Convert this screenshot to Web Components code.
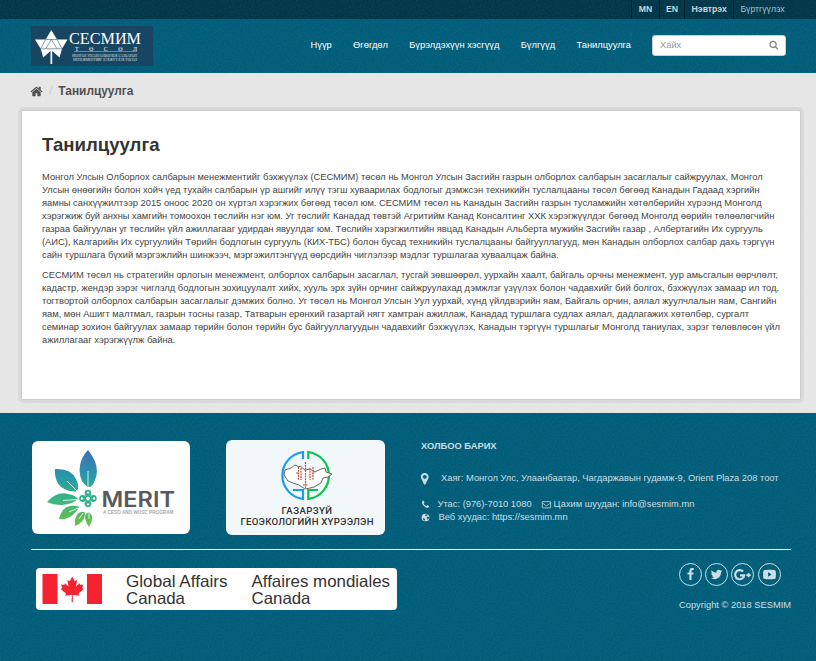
<!DOCTYPE html>
<html lang="mn">
<head>
<meta charset="utf-8">
<title>Танилцуулга</title>
<style>
html,body{margin:0;padding:0}
body{width:816px;height:661px;overflow:hidden;background:#005d7a;font:9.33px/13px "Liberation Sans",Arial,sans-serif;color:#444;
--grain:url("data:image/svg+xml,%3Csvg xmlns='http://www.w3.org/2000/svg' width='120' height='120'%3E%3Cfilter id='n' x='0' y='0' width='1' height='1'%3E%3CfeTurbulence type='fractalNoise' baseFrequency='.6' numOctaves='2' stitchTiles='stitch'/%3E%3CfeColorMatrix values='0 0 0 0 .5 0 0 0 0 .5 0 0 0 0 .5 .16 0 0 0 -.06'/%3E%3C/filter%3E%3Crect width='120' height='120' filter='url(%23n)'/%3E%3C/svg%3E")}
</style>
</head>
<body>
<site-page></site-page>
<script>
const define = (name, html) => {
  const t = document.createElement('template');
  t.innerHTML = html;
  customElements.define(name, class extends HTMLElement {
    constructor() {
      super();
      this.attachShadow({ mode: 'open' }).append(t.content.cloneNode(true));
    }
  });
};

const glyphs = {
  home: '<path d="M1472 992v480q0 26-19 45t-45 19h-384v-384h-256v384h-384q-26 0-45-19t-19-45v-480q0-1 .5-3t.5-3l575-474 575 474q1 2 1 6zm223-69l-62 74q-8 9-21 11h-3q-13 0-21-7l-692-577-692 577q-12 8-24 7-13-2-21-11l-62-74q-8-10-7-23.5t11-21.5l719-599q32-26 76-26t76 26l244 204v-195q0-14 9-23t23-9h192q14 0 23 9t9 23v408l219 182q10 8 11 21.5t-7 23.5z"/>',
  search: '<path d="M1216 832q0-185-131.500-316.500t-316.500-131.500-316.500 131.500-131.500 316.500 131.500 316.500 316.500 131.500 316.500-131.500 131.500-316.500zm512 832q0 52-38 90t-90 38q-54 0-90-38l-343-342q-179 124-399 124-143 0-273.500-55.500t-225-150-150-225-55.500-273.500 55.500-273.500 150-225 225-150 273.500-55.500 273.500 55.500 225 150 150 225 55.500 273.500q0 220-124 399l343 343q37 37 37 90z"/>',
  marker: '<path d="M1152 640q0-106-75-181t-181-75-181 75-75 181 75 181 181 75 181-75 75-181zm256 0q0 109-33 179l-364 774q-16 33-47.500 52t-67.500 19-67.500-19-46.500-52l-365-774q-33-70-33-179 0-212 150-362t362-150 362 150 150 362z"/>',
  phone: '<path d="M1600 1240q0 27-10 70.500t-21 68.500q-21 50-122 106-94 51-186 51-27 0-52.500-3.500t-57.500-12.500-47.500-14.500-55.500-20.500-49-18q-98-35-175-83-128-79-264.500-215.500t-215.500-264.500q-48-77-83-175-3-9-18-49t-20.500-55.500-14.500-47.500-12.500-57.500-3.500-52.500q0-92 51-186 56-101 106-122 25-11 68.500-21t70.500-10q14 0 21 3 18 6 53 76 11 19 30 54t35 63.500 31 53.500q3 4 17.500 25t21.500 35.500 7 28.500q0 20-28.500 50t-62 55-62 53-28.500 46q0 9 5 22.500t8.500 20.500 14 24 11.500 19q76 137 174 235t235 174q2 1 19 11.500t24 14 20.500 8.500 22.500 5q18 0 46-28.500t53-62 55-62 50-28.500q14 0 28.500 7t35.500 21.500 25 17.500q25 15 53.500 31t63.500 35 54 30q70 35 76 53 3 7 3 21z"/>',
  envelope: '<path fill="none" stroke="currentColor" stroke-width="150" d="M65 420q0-100 100-100h1462q100 0 100 100v1052q0 100-100 100H165q-100 0-100-100zM80 560l640 520q176 130 352 0l640-520"/>',
  globe: '<circle cx="896" cy="896" r="768"/><path fill="#005d7a" d="M900 300l300-60 190 120-110 110-190 60-60 150-150-90-60-150zM1180 800l230-60 180 100-20 220-150 230-110 100-60-300-120-130zM400 1060l260 30 170 130-30 130-120 170-200-110-110-170z"/>',
  facebook: '<path d="M1343 12v264h-157q-86 0-116 36t-30 108v189h293l-39 296h-254v759h-306v-759h-255v-296h255v-218q0-186 104-288.500t277-102.500q147 0 228 12z"/>',
  twitter: '<path d="M1684 408q-67 98-162 167 1 14 1 42 0 130-38 259.500t-115.500 248.500-184.500 210.500-258 146-323 54.500q-271 0-496-145 35 4 78 4 225 0 401-138-105-2-188-64.500t-114-159.500q33 5 61 5 43 0 85-11-112-23-185.500-111.500t-73.500-205.500v-4q68 38 146 41-66-44-105-115t-39-154q0-88 44-163 121 149 294.500 238.500t371.500 99.500q-8-38-8-74 0-134 94.500-228.500t228.500-94.500q140 0 236 102 109-21 205-78-37 115-142 178 93-10 186-50z"/>',
  gplus: '<path fill="none" stroke="currentColor" stroke-width="240" d="M900 510a510 510 0 1 0 135 430H560"/><path fill="none" stroke="currentColor" stroke-width="190" d="M1520 660v500M1270 910h500"/>',
  youtube: '<path fill-rule="evenodd" d="M250 265q646-50 1292 0q200 15 220 230q50 400 0 802q-20 215-220 230q-646 50-1292 0q-200-15-220-230q-50-400 0-802q20-215 220-230zM700 580v620l500-310z"/>'
};
customElements.define('fa-icon', class extends HTMLElement {
  constructor() { super(); this.attachShadow({ mode: 'open' }); }
  connectedCallback() {
    this.shadowRoot.innerHTML = `<style>:host{display:inline-block;width:10px;height:10px}svg{display:block;width:100%;height:100%;fill:currentColor;overflow:visible}</style><svg viewBox="0 0 1792 1792">${glyphs[this.getAttribute('name')]}</svg>`;
  }
});

define('account-bar', `<style>
:host{display:block;height:19px;background:var(--grain),#003647;color:#c6d7db}
ul{margin:0 25px 0 0;padding:0;list-style:none;display:flex;justify-content:flex-end;height:19px}
li{box-sizing:border-box;border-left:1px solid #00212b;padding:0 6.3px;line-height:18px;font-weight:bold;white-space:nowrap;font-size:8.7px}
li:first-child{padding-left:7px}
li:last-child{font-weight:normal;color:#a5c4cf}
</style><ul><li>MN</li><li>EN</li><li>Нэвтрэх</li><li>Бүртгүүлэх</li></ul>`);

define('sesmim-logo', `<style>:host{display:block;width:122px;height:40px}svg{display:block}</style>
<svg width="122" height="40" viewBox="0 0 122 40"><rect width="122" height="40" fill="#184562"/>
<path fill="#fff" d="M20.300 4L26 13.500H36.500L31 22.800 28.500 31.500 21.200 25V38H19.500V25L12.200 31.500 9.700 22.800 4 13.500H14.700z"/>
<path d="M14.700 13.500H26M9.500 22.800h21.600M14.700 13.500L9.700 22.800M26 13.500l5 9.300M14.700 22.800l5.600-9.300 5.700 9.300" fill="none" stroke="#54768c" stroke-width=".7"/>
<g fill="#fff" font-family="Liberation Serif,serif"><text x="38" y="18" font-size="16" textLength="72" lengthAdjust="spacingAndGlyphs">СЕСМИМ</text>
<text x="44" y="24.700" font-size="6" textLength="62">ТӨСӨЛ</text><path d="M43 25.500h63v.6H43z" opacity=".7"/>
<g font-size="3.200" fill="#d5e0e8"><text x="41" y="31.200" textLength="65" lengthAdjust="spacingAndGlyphs">МОНГОЛ УЛСЫН ОЛБОРЛОХ САЛБАРЫН</text><text x="42" y="35.200" textLength="64" lengthAdjust="spacingAndGlyphs">МЕНЕЖМЕНТИЙГ БЭХЖҮҮЛЭХ ТӨСӨЛ</text></g></g></svg>`);

define('search-box', `<style>:host{box-sizing:border-box;display:flex;align-items:center;justify-content:space-between;width:134px;height:21px;padding:0 7px 0 7px;background:#fff;border:1px solid #ccc;border-radius:3px;color:#999}span{margin-top:-1px}fa-icon{width:9.500px;height:9.500px;color:#888;margin-top:-1px}</style><span>Хайх</span><fa-icon name="search"></fa-icon>`);

define('site-header', `<style>
:host{display:flex;box-sizing:border-box;height:54px;padding:7px 30px 0 31px;background:var(--grain),#005d7a;justify-content:space-between;align-items:flex-start}
.r{display:flex;align-items:center;padding-top:9px}
nav{display:flex;gap:21.300px;margin:-2px 21px 0 0;color:#fff;white-space:nowrap;line-height:20px}
</style><sesmim-logo></sesmim-logo><div class="r"><nav><span>Нүүр</span><span>Өгөгдөл</span><span>Бүрэлдэхүүн хэсгүүд</span><span>Бүлгүүд</span><span>Танилцуулга</span></nav><search-box></search-box></div>`);

define('bread-crumb', `<style>:host{display:flex;align-items:center;height:15px;font-size:11.900px;font-weight:bold;color:#505050}fa-icon{width:13px;height:13px;margin:-1px 0 0 -1px}i{font-style:normal;font-weight:normal;color:#ccc;margin:0 6px 0 6px}</style><fa-icon name="home"></fa-icon><i>/</i><slot></slot>`);

define('content-card', `<style>:host{display:block;box-sizing:border-box;margin:0 15px 0 21px;height:290px;background:#fff;border:1px solid #ccc;border-radius:2px;box-shadow:0 0 0 3px rgba(0,0,0,.05);padding:24px 20px}
::slotted(h1){margin:0 0 16px;font-size:18.6px;line-height:20px;color:#333}
::slotted(p){margin:0 0 6.500px;white-space:nowrap}</style><slot></slot>`);

define('merit-logo', `<style>:host{display:block;width:158px;height:93px}svg{display:block}</style>
<svg width="158" height="93" viewBox="0 0 158 93"><defs><linearGradient id="g" gradientUnits="userSpaceOnUse" x1="0" y1="10" x2="0" y2="86"><stop offset="0" stop-color="#3f6fb8"/><stop offset=".35" stop-color="#279aa9"/><stop offset=".62" stop-color="#36b588"/><stop offset="1" stop-color="#72bf44"/></linearGradient></defs>
<rect width="158" height="93" rx="6" fill="#fff"/>
<g fill="url(#g)"><path d="M56 9Q69 25 63 39 60 47 56 46 48 42 47.500 29 48 17 56 9zM23 28Q39 27 44 38 48 46 45 50 39 52 29 46 22 39 23 28zM15 61Q25 50 36 53 43 54 46 58 41 63 30 64 21 64 15 61zM27 78Q30 66 38 65 44 64 47 66 45 71 38 76 32 79 27 78zM43 85Q42 73 49 71 53 70 53 73 53 81 43 85zM57 86Q51 77 54 73 57 70 59 73 62 78 57 86z"/></g>
<g fill="none" stroke="#fff" stroke-width=".8"><path d="M56 47V30M46 51L35 40M45 58.500l-14 1M46 67l-9 4M51 72l-4 6M57 72v6"/></g>
<g transform="translate(56 57.500)" fill="none" stroke="#2fb28d" stroke-width="1.600"><circle cy="-5.300" r="2.600"/><circle cy="5.300" r="2.600"/><circle cx="-5.300" r="2.600"/><circle cx="5.300" r="2.600"/><path d="M-6-2.500L2.500 6M-2.500-6L6 2.500M6-2.500L-2.500 6M2.500-6L-6 2.500"/></g>
<text x="69.500" y="65.500" font-family="Inter,sans-serif" font-weight="600" font-size="21.500" fill="#5a5a5c" textLength="73.500" lengthAdjust="spacingAndGlyphs">MERIT</text>
<text x="71" y="72.500" font-family="Liberation Sans,sans-serif" font-weight="bold" font-size="4.700" fill="#aaa" textLength="70.500" lengthAdjust="spacingAndGlyphs">A CESO AND WUSC PROGRAM</text></svg>`);

define('geo-logo', `<style>:host{display:block;width:159px;height:95px}svg{display:block}</style>
<svg width="159" height="95" viewBox="0 0 159 95"><rect width="159" height="95" rx="6" fill="#f2f7fa"/>
<g fill="none" stroke-width="2.200"><path stroke="#189cf0" d="M77 19V12A23.700 23.700 0 0 0 77 59V50H67"/><path stroke="#08c44c" d="M82.300 19V12A23.700 23.700 0 0 1 82.300 59V50H92"/></g>
<path d="M59 30l6-2 4-3 4 2 1-1 5 4 5-1 5 3 6-3 4-1 1 4 6 2-4 3-5 1-2 5-7 4-4 1-5 1-6-4-6-2-5-2-4-6z" fill="#fff" stroke="#444" stroke-width=".8"/>
<path d="M79.500 22v26M75 28v12M84 28v12M72.500 27v13M87 27v13M70 33h3M86 33h3M77 45h5" stroke="#b9543d" stroke-width="1.200" stroke-dasharray="2 .7"/>
<g font-family="Roboto,sans-serif" font-weight="500" font-size="9.600" fill="#333"><text x="55.500" y="73.500" textLength="50.500">ГАЗАРЗҮЙ</text><text x="14.500" y="84.700" textLength="133">ГЕОЭКОЛОГИЙН ХҮРЭЭЛЭН</text></g></svg>`);

define('canada-logo', `<style>:host{display:block;width:361px;height:42px}svg{display:block}</style>
<svg width="361" height="42" viewBox="0 0 361 42"><rect width="361" height="42" rx="4" fill="#fff"/><g fill="#f5232f"><path d="M6.500 6h15v30h-15zM51 6h15v30H51z"/>
<path d="M36.200 8.500l2.600 4.800 2.300-1.200-1.100 6.500 3.500-3.300.7 1.700 3.200-.6-1.200 3.800 1.600.8-5.300 4.500.8 2.200-6.600-.9.200 7.200h-1.300l.2-7.200-6.600.9.800-2.200-5.300-4.500 1.600-.8-1.200-3.800 3.200.6.700-1.700 3.500 3.300-1.100-6.500 2.300 1.200z"/></g>
<g font-family="Liberation Sans,Arial,sans-serif" font-size="16.500" fill="#333"><text x="90" y="18.500" textLength="101.500" lengthAdjust="spacingAndGlyphs">Global Affairs</text><text x="90" y="35.800" textLength="59" lengthAdjust="spacingAndGlyphs">Canada</text><text x="215.500" y="18.500" textLength="138.500" lengthAdjust="spacingAndGlyphs">Affaires mondiales</text><text x="215.500" y="35.800" textLength="59" lengthAdjust="spacingAndGlyphs">Canada</text></g></svg>`);

define('contact-info', `<style>:host{display:block;color:#ccdfe4}
h2{margin:0 0 19px;font-size:9.33px;line-height:13px}
div{display:flex;align-items:center;height:13px;white-space:nowrap}
.a{margin-bottom:13px}fa-icon{flex:none;width:9px;height:9px}.a fa-icon{width:13.500px;height:13.500px;margin:0 9.500px 0 -3px}
</style><h2>ХОЛБОО БАРИХ</h2><div class="a"><fa-icon name="marker"></fa-icon><span>Хаяг: Монгол Улс, Улаанбаатар, Чагдаржавын гудамж-9, Orient Plaza 208 тоот</span></div>
<div><fa-icon name="phone" style="margin-right:7.500px"></fa-icon><span>Утас: (976)-7010 1080</span><fa-icon name="envelope" style="margin:0 3px 0 10px"></fa-icon><span>Цахим шуудан: info@sesmim.mn</span></div>
<div><fa-icon name="globe" style="margin-right:8.500px"></fa-icon><span>Веб хуудас: https://sesmim.mn</span></div>`);

define('social-links', `<style>:host{display:block;width:112px;color:#ccdfe4}
.s{display:flex;gap:3.200px;margin-bottom:12.500px}.s span{box-sizing:border-box;width:23px;height:23px;border:1px solid #ccdfe4;border-radius:50%;display:flex;align-items:center;justify-content:center}fa-icon{flex:none;width:13px;height:13px}p{margin:0;white-space:nowrap}</style>
<div class="s"><span><fa-icon name="facebook"></fa-icon></span><span><fa-icon name="twitter"></fa-icon></span><span><fa-icon name="gplus" style="width:16px;height:16px"></fa-icon></span><span><fa-icon name="youtube"></fa-icon></span></div><p>Copyright © 2018 SESMIM</p>`);

define('site-footer', `<style>:host{display:block;box-sizing:border-box;height:248px;background:var(--grain),#005d7a;padding:27px 25px 0 31px}
.t{display:grid;grid-template-columns:194px 196px 1fr;height:109px;border-bottom:1px solid #fff}
merit-logo{margin:1px 0 0 1px}geo-logo{margin:0 0 0 1px}
.b{display:flex;justify-content:space-between;padding:13px 0 0 5px}canada-logo{margin-top:5px}</style>
<div class="t"><merit-logo></merit-logo><geo-logo></geo-logo><contact-info></contact-info></div><div class="b"><canada-logo></canada-logo><social-links></social-links></div>`);

define('site-page', `<style>:host{display:block}main{display:block;box-sizing:border-box;height:340px;background:var(--grain),#e7e7e7;padding-top:11px}bread-crumb{margin:0 0 11px 31px}</style>
<account-bar></account-bar><site-header></site-header><main><bread-crumb>Танилцуулга</bread-crumb><content-card><h1>Танилцуулга</h1>
<p>Монгол Улсын Олборлох салбарын менежментийг бэхжүүлэх (СЕСМИМ) төсөл нь Монгол Улсын Засгийн газрын олборлох салбарын засаглалыг сайжруулах, Монгол<br>Улсын өнөөгийн болон хойч үед тухайн салбарын үр ашгийг илүү тэгш хуваарилах бодлогыг дэмжсэн техникийн туслалцааны төсөл бөгөөд Канадын Гадаад хэргийн<br>яамны санхүүжилтээр 2015 оноос 2020 он хүртэл хэрэгжих бөгөөд төсөл юм. СЕСМИМ төсөл нь Канадын Засгийн газрын тусламжийн хөтөлбөрийн хүрээнд Монголд<br>хэрэгжиж буй анхны хамгийн томоохон төслийн нэг юм. Уг төслийг Канадад төвтэй Агритийм Канад Консалтинг ХХК хэрэгжүүлдэг бөгөөд Монголд өөрийн төлөөлөгчийн<br>газраа байгуулан уг төслийн үйл ажиллагааг удирдан явуулдаг юм. Төслийн хэрэгжилтийн явцад Канадын Альберта мужийн Засгийн газар , Албертагийн Их сургууль<br>(АИС), Калгарийн Их сургуулийн Төрийн бодлогын сургууль (КИХ-ТБС) болон бусад техникийн туслалцааны байгууллагууд, мөн Канадын олборлох салбар дахь тэргүүн<br>сайн туршлага бүхий мэргэжлийн шинжээч, мэргэжилтэнгүүд өөрсдийн чиглэлээр мэдлэг туршлагаа хуваалцаж байна.</p>
<p>СЕСМИМ төсөл нь стратегийн орлогын менежмент, олборлох салбарын засаглал, тусгай зөвшөөрөл, уурхайн хаалт, байгаль орчны менежмент, уур амьсгалын өөрчлөлт,<br>кадастр, жендэр зэрэг чиглэлд бодлогын зохицуулалт хийх, хууль эрх зүйн орчинг сайжруулахад дэмжлэг үзүүлэх болон чадавхийг бий болгох, бэхжүүлэх замаар ил тод,<br>тогтвортой олборлох салбарын засаглалыг дэмжих болно. Уг төсөл нь Монгол Улсын Уул уурхай, хүнд үйлдвэрийн яам, Байгаль орчин, аялал жуулчлалын яам, Сангийн<br>яам, мөн Ашигт малтмал, газрын тосны газар, Татварын ерөнхий газартай нягт хамтран ажиллаж, Канадад туршлага судлах аялал, дадлагажих хөтөлбөр, сургалт<br>семинар зохион байгуулах замаар төрийн болон төрийн бус байгууллагуудын чадавхийг бэхжүүлэх, Канадын тэргүүн туршлагыг Монголд таниулах, зэрэг төлөвлөсөн үйл<br>ажиллагааг хэрэгжүүлж байна.</p></content-card></main><site-footer></site-footer>`);
</script>
</body>
</html>
